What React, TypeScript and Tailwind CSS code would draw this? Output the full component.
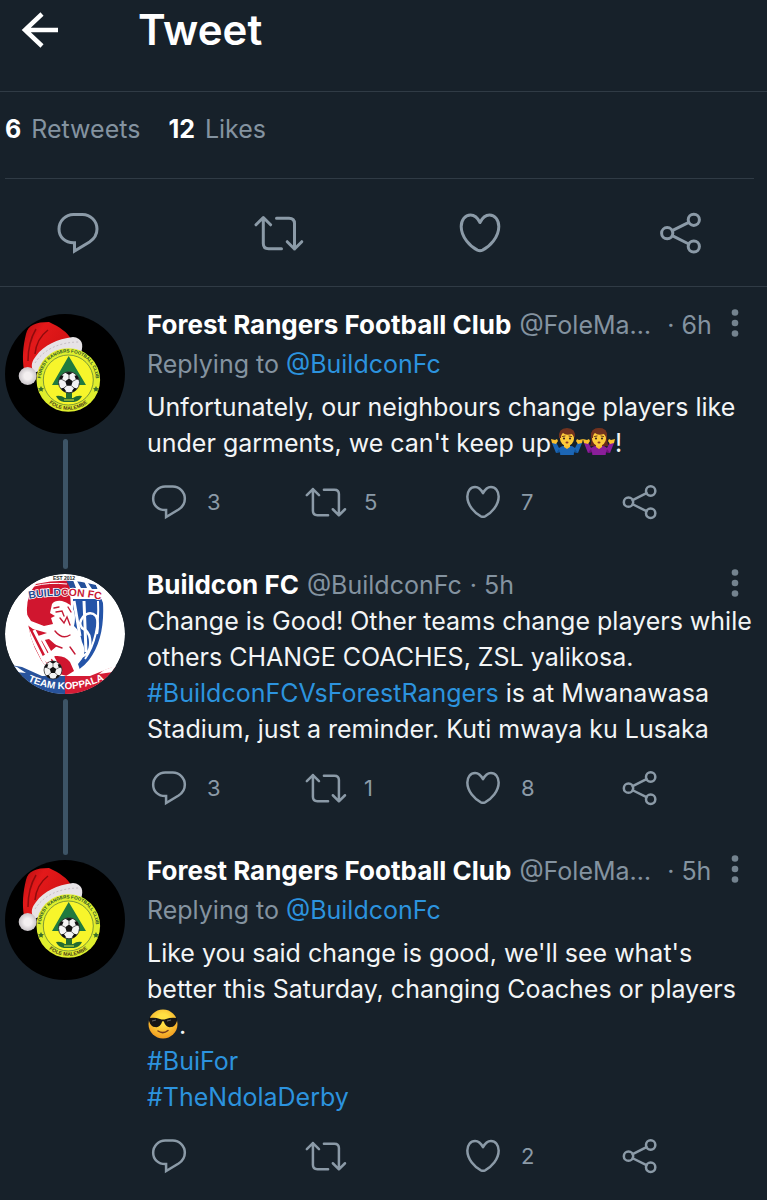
import type { ReactNode } from "react";

type IconProps = { className?: string };

const iconStroke = {
  viewBox: "0 0 48 48",
  fill: "none",
  stroke: "currentColor",
  strokeWidth: 3,
  strokeLinecap: "round" as const,
  strokeLinejoin: "round" as const,
  overflow: "visible" as const,
  "aria-hidden": true,
};

function ReplyIcon({ className }: IconProps) {
  return (
    <svg {...iconStroke} strokeLinejoin="miter" className={className}>
      <path d="M19.5 5.5H28.5C36.5 5.5 43 12 43 20C43 25.5 40 30 35.5 33L20.5 42V33.7H19.5C11 33.7 5 28 5 20C5 12 11.5 5.5 19.5 5.5Z" />
    </svg>
  );
}

function RetweetIcon({ className }: IconProps) {
  return (
    <svg {...iconStroke} className={className}>
      <path d="M1 15.8L8.3 8.5L15.6 15.8M8.3 8.5V34.5Q8.3 39.8 13.6 39.8H26.5" />
      <path d="M21.5 9.2H34Q39.5 9.2 39.5 14.5V40M32.2 32.7L39.5 40L46.8 32.7" />
    </svg>
  );
}

function HeartIcon({ className }: IconProps) {
  return (
    <svg {...iconStroke} className={className}>
      <path d="M24 13.5C21.5 8.5 18 6 14.5 6C9 6 5.2 11 5.2 17.5C5.2 28 14 37.5 21.5 41.2Q24 42.3 26.5 41.2C34 37.5 42.8 28 42.8 17.5C42.8 11 39 6 33.5 6C30 6 26.5 8.5 24 13.5Z" />
    </svg>
  );
}

function ShareIcon({ className }: IconProps) {
  return (
    <svg {...iconStroke} className={className}>
      <circle cx="10.2" cy="24.2" r="5.6" />
      <circle cx="36.8" cy="10.8" r="5.6" />
      <circle cx="36.8" cy="37.5" r="5.6" />
      <path d="M15.2 21.7L31.8 13.3M15.2 26.7L31.8 35" />
    </svg>
  );
}

function SoccerBall({ x, y, r }: { x: number; y: number; r: number }) {
  return (
    <g transform={`translate(${x} ${y}) scale(${r / 10})`}>
      <circle r="10" fill="#f4f4f4" stroke="#222" strokeWidth=".8" />
      <path
        fill="#111"
        d="M0-3.6L3.6-1L2.2 3.2H-2.2L-3.6-1ZM-3.5-9.2L0-7L3.5-9.2Q0-10.6-3.5-9.2ZM9.6-2.4L6.6-2.6L5.2-6.2L7.4-6.6Q9.2-4.8 9.6-2.4ZM-9.6-2.4L-6.6-2.6L-5.2-6.2L-7.4-6.6Q-9.2-4.8-9.6-2.4ZM7.8 6L5 5.2L3 8L3.4 9.4Q6.2 8.4 7.8 6ZM-7.8 6L-5 5.2L-3 8L-3.4 9.4Q-6.2 8.4-7.8 6Z"
      />
      <path
        stroke="#333"
        strokeWidth=".7"
        d="M0-3.6V-7M3.6-1L6.6-2.6M2.2 3.2L4.8 5.4M-2.2 3.2L-4.8 5.4M-3.6-1L-6.6-2.6"
      />
    </g>
  );
}

function ForestAvatar({ id }: { id: string }) {
  return (
    <svg viewBox="0 0 120 120" className="size-30 shrink-0" role="img" aria-label="Forest Rangers Football Club">
      <defs>
        <linearGradient id={`${id}-hat`} x1="0" y1="0" x2="1" y2=".6">
          <stop offset="0" stopColor="#b40d10" />
          <stop offset=".35" stopColor="#e3191a" />
          <stop offset="1" stopColor="#cf1112" />
        </linearGradient>
        <radialGradient id={`${id}-fur`}>
          <stop offset=".4" stopColor="#f3eff0" />
          <stop offset="1" stopColor="#c9c4c8" />
        </radialGradient>
        <path id={`${id}-top`} d="M37 74A27.500 27.500 0 1 1 89.600 74" />
        <path id={`${id}-bottom`} d="M36.300 79A30 30 0 0 0 90.300 79" />
      </defs>
      <circle cx="60" cy="60" r="60" fill="#000" />
      <path
        fill={`url(#${id}-hat)`}
        d="M19 56C17 44 18 32 21 20C23 11 31 8 44 8C55 13 62 18 67 26L31 49L27 56Z"
      />
      <path fill="none" stroke="#8f0b0d" strokeWidth="1.500" d="M23 47C23 36 25 25 31 15M30 40C31 30 35 22 43 16" />
      <path fill="#e7e3e6" d="M29 59C25 52 27 47 31 42C39 31 52 25 68 23C77 24 79 30 76 39C61 35 43 41 34 57Z" />
      <path fill="none" stroke="#c6bfc5" strokeWidth="1" strokeDasharray="2 2" d="M30 49C38 36 54 28 74 28" />
      <circle cx="22.700" cy="62" r="9" fill={`url(#${id}-fur)`} />
      <circle cx="63.300" cy="66" r="31.800" fill="#dfee2d" />
      <circle cx="63.300" cy="66" r="25" fill="#f7f52b" stroke="#5f813a" strokeWidth=".8" />
      <text fill="#26502c" fontFamily="Liberation Sans, sans-serif" fontWeight="700" fontSize="4.600">
        <textPath href={`#${id}-top`} startOffset="50%" textAnchor="middle">FOREST RANGERS FOOTBALL CLUB</textPath>
      </text>
      <text fill="#4e3c18" fontFamily="Liberation Sans, sans-serif" fontWeight="700" fontSize="5.200">
        <textPath href={`#${id}-bottom`} startOffset="50%" textAnchor="middle">FOLE MALEMBE</textPath>
      </text>
      <path fill="#376b2b" d="M36 72l1 2 2 .3-1.500 1.400.4 2-1.900-1-1.900 1 .4-2L33 74.300l2-.3ZM91 72l1 2 2 .3-1.500 1.400.4 2-1.900-1-1.900 1 .4-2L88 74.300l2-.3Z" />
      <path fill="#1f7a3f" d="M63.700 42L81 71H74Q64 54 54 71H47Z" />
      <path fill="#236b32" d="M61 78H67V85H61ZM51 82Q56 81 60 84H68Q72 81 77 82Q75 87 69 88H59Q53 87 51 82Z" />
      <path fill="none" stroke="#d7e33b" strokeWidth="1" d="M59 86H69" />
      <SoccerBall x={64} y={68.300} r={10.500} />
    </svg>
  );
}

function BuildconAvatar() {
  return (
    <svg viewBox="0 0 120 120" className="size-30 shrink-0" role="img" aria-label="Buildcon FC">
      <defs>
        <clipPath id="bc-round">
          <circle cx="60" cy="60" r="60" />
        </clipPath>
        <clipPath id="bc-shield">
          <path d="M31 10Q62 3 91 11L98 29Q100 65 84 86Q76 96 62 102Q42 98 35 84Q23 64 22 38Q21 22 31 10Z" />
        </clipPath>
        <path id="bc-name" d="M23 25Q60 18 97 26" />
        <path id="bc-ribbon" d="M23 107Q60 124 99 106" />
      </defs>
      <g clipPath="url(#bc-round)">
        <circle cx="60" cy="60" r="60" fill="#fff" />
        <g clipPath="url(#bc-shield)">
          <path fill="#d0162f" d="M15 0H64L70 104H15Z" />
          <path fill="#2454a8" d="M68 25H105V110H70Z" />
          <path fill="none" stroke="#fff" strokeWidth="3" d="M69 27L75 62M79 27L81 78M22 54L42 94M29 56L50 97M36 62L56 98" />
          <path fill="#fff" d="M61 0H100V16H66Z" />
          <path fill="#24509a" d="M61 6H68L71 14H65ZM72 7H79L82 14H76ZM83 9H90L93 15H87Z" />
        </g>
        <path fill="none" stroke="#fff" strokeWidth="2" d="M93 27Q95 63 80 85" />
        <path fill="none" stroke="#fff" strokeWidth="1" d="M29 12Q44 8 62 10" />
        <text
          fill="#27498f"
          stroke="#fff"
          strokeWidth="1.600"
          paintOrder="stroke"
          fontFamily="Liberation Sans, sans-serif"
          fontWeight="700"
          fontSize="10.500"
        >
          <textPath href="#bc-name" startOffset="50%" textAnchor="middle">
            BUILD<tspan fill="#c81835">CON FC</tspan>
          </textPath>
        </text>
        <text x="59" y="6" textAnchor="middle" fill="#222" fontFamily="Liberation Sans, sans-serif" fontWeight="700" fontSize="5">EST 2012</text>
        <path
          fill="#fff"
          d="M47 30Q50 26 57 27Q66 29 69 37Q71 44 69 52Q75 57 77 68Q82 77 77 85L73 90L76 99L71 102H61L69 97L65 88Q60 81 50 82L42 89L36 83L46 77L52 72L44 65L35 67L33 62L42 59L28 55L21 50L19 36L26 47L39 52L48 50L46 44L50 42L45 39Z"
        />
        <path fill="none" stroke="#fff" strokeWidth="2.500" strokeLinecap="round" d="M76 83Q87 79 85 65Q84 57 77 54Q73 49 78 43Q85 36 91 42Q94 48 92 59" />
        <path fill="none" stroke="#c51b36" strokeWidth="1.400" strokeLinecap="round" d="M49 34L54 33M51 38L57 37L59 42M55 44L59 49L62 43L65 51M63 33L66 38M50 57Q57 66 65 61M49 71L57 74M65 73L70 80" />
        <path fill="#28539c" d="M0 90L17 93L37 102H60V122H5Z" />
        <path fill="#d41c35" d="M60 102H85L105 94L120 91V122H60Z" />
        <path fill="#fff" d="M4 91L12 93L21 99L11 98ZM113 91L99 96L94 100L108 98Z" />
        <text fill="#fff" fontFamily="Liberation Sans, sans-serif" fontWeight="700" fontSize="10">
          <textPath href="#bc-ribbon" startOffset="50%" textAnchor="middle">TEAM KOPPALA</textPath>
        </text>
        <SoccerBall x={48} y={96} r={9} />
      </g>
    </svg>
  );
}

function ShrugEmoji({ woman }: { woman?: boolean }) {
  const shirt = woman ? "#8a1f9a" : "#1c66b5";
  const shade = woman ? "#701179" : "#12559b";
  return (
    <svg viewBox="0 0 32 32" className="inline-block size-8 align-[-6px]" role="img" aria-label={woman ? "woman shrugging" : "man shrugging"}>
      {woman && <path fill="#6b291b" d="M8 10Q8 2 16 2Q25 2 24 11Q24 18 26 20H7Q9 17 8 10Z" />}
      <path fill={shirt} d="M1 17L5 16L8 22Q12 19 16 20Q21 19 24 22L27 16L31 17L27 27L23 26V29H9V26L5 27Z" />
      <path fill={shade} d="M8 23L10 29H9V26L5 27ZM24 23L22 29H23V26L27 27Z" />
      <path fill="#fbc02d" d="M0 13L4 14L6 13L7 15L5 18L1 17ZM32 13L28 14L26 13L25 15L27 18L31 17ZM13 18H19V21L16 23L13 21Z" />
      <ellipse cx="16" cy="12.500" rx="7" ry="7.500" fill="#fccb3b" />
      <path fill="#71331f" d="M8 12Q7 2 16 2Q25 2 24 12L21 8Q15 10 12 7Q10 8 10 12Z" />
      <path fill="none" stroke="#6b351b" strokeWidth="1" strokeLinecap="round" d="M11.500 10.500L14 10M18 10L20.500 10.500" />
      <circle cx="13" cy="12.500" r="1.100" fill="#3b2925" />
      <circle cx="19" cy="12.500" r="1.100" fill="#3b2925" />
      <ellipse cx="16" cy="16.500" rx="1.500" ry="1" fill="#8a3926" />
    </svg>
  );
}

function SunglassesEmoji() {
  return (
    <svg viewBox="0 0 32 32" className="inline-block size-8 align-[-6px]" role="img" aria-label="smiling face with sunglasses">
      <defs>
        <radialGradient id="cool-face" cx=".5" cy=".35" r=".65">
          <stop offset=".3" stopColor="#ffdf43" />
          <stop offset="1" stopColor="#f29b20" />
        </radialGradient>
      </defs>
      <circle cx="16" cy="16" r="14.500" fill="url(#cool-face)" />
      <path fill="#151515" d="M2 10Q8 9 13 11Q16 12 19 11Q24 9 30 10L30 13Q28 19 24 19Q19 20 17 14Q16 12 15 14Q13 20 8 19Q4 19 2 13Z" />
      <path stroke="#666" strokeWidth="1" d="M5 13L9 12M20 13L24 12" />
      <path fill="none" stroke="#76391b" strokeWidth="1.500" strokeLinecap="round" d="M11 23Q16 26.500 21 22.500" />
    </svg>
  );
}

function Action({ label, count, children }: { label: string; count?: number; children: ReactNode }) {
  return (
    <button type="button" aria-label={label} className="flex h-12 items-center gap-4 text-[22px]">
      <span className="flex w-11 justify-center">{children}</span>
      {count !== undefined && <span>{count}</span>}
    </button>
  );
}

type TweetProps = {
  avatar: ReactNode;
  name: string;
  handle: string;
  time: string;
  replyingTo?: string;
  replies?: number;
  retweets?: number;
  likes?: number;
  last?: boolean;
  children: ReactNode;
};

function Tweet({ avatar, name, handle, time, replyingTo, replies, retweets, likes, last, children }: TweetProps) {
  return (
    <li className="flex gap-[22px] pl-[5px]">
      <div className="flex flex-col items-center">
        {avatar}
        {!last && <div className="my-[5px] w-[5px] flex-1 rounded-full bg-[#3d5466]" />}
      </div>
      <article className="-mt-[7px] min-w-0 flex-1 pb-12">
        <header className="flex h-9 items-center pr-6">
          <div className="flex min-w-0 flex-1 items-center whitespace-nowrap">
            <strong className="mr-2 text-[26px] font-bold text-white">{name}</strong>
            <span className={handle.endsWith("…") ? "mr-4 text-[#8493a0]" : "mr-2 text-[#8493a0]"}>{handle}</span>
            <span className="text-[#8493a0]">· {time}</span>
          </div>
          <button type="button" aria-label="More" className="text-[#74838f]">
            <svg viewBox="0 0 16 32" className="h-8 w-4" fill="currentColor" aria-hidden="true">
              <circle cx="8" cy="3.500" r="3.300" />
              <circle cx="8" cy="14" r="3.300" />
              <circle cx="8" cy="24.500" r="3.300" />
            </svg>
          </button>
        </header>
        {replyingTo && (
          <p className="mt-[3px] mb-[7px] text-[#8493a0]">
            Replying to <a href="#profile" className="text-[#2c93de]">{replyingTo}</a>
          </p>
        )}
        <div className="text-[#f3f5f6]">{children}</div>
        <div className="mt-[17px] grid grid-cols-[157fr_157fr_157fr_149fr] text-[#8b9aa7]">
          <Action label="Reply" count={replies}><ReplyIcon className="size-10" /></Action>
          <Action label="Retweet" count={retweets}><RetweetIcon className="size-10" /></Action>
          <Action label="Like" count={likes}><HeartIcon className="size-10" /></Action>
          <Action label="Share"><ShareIcon className="size-10" /></Action>
        </div>
      </article>
    </li>
  );
}

export default function App() {
  return (
    <main className="min-h-screen overflow-hidden bg-[#17212a] font-['Inter','Liberation_Sans',sans-serif] text-[25px] leading-9">
      <header className="flex h-[92px] items-start border-b border-[#303b45] pl-5 text-white">
        <button type="button" aria-label="Back" className="flex h-[60px] items-center">
          <svg viewBox="0 0 42 42" className="size-[42px]" fill="none" stroke="currentColor" strokeWidth="4.500" aria-hidden="true">
            <path d="M22 5L5 21L22 37M5 21H38" />
          </svg>
        </button>
        <h1 className="ml-[76px] text-[42px] leading-[60px] font-semibold">Tweet</h1>
      </header>

      <section className="mr-[13px] ml-[5px] flex h-[87px] items-center gap-7 border-b border-[#303b45] pb-3 text-[#8493a0]">
        <a href="#retweets" className="flex gap-2.5"><strong className="font-bold text-white">6</strong>Retweets</a>
        <a href="#likes" className="flex gap-2.5"><strong className="font-bold text-white">12</strong>Likes</a>
      </section>

      <div className="flex h-[108px] items-center justify-between border-b border-[#303b45] pr-[62px] pl-[54px] text-[#8b9aa7]">
        <button type="button" aria-label="Reply"><ReplyIcon className="size-12" /></button>
        <button type="button" aria-label="Retweet"><RetweetIcon className="size-12" /></button>
        <button type="button" aria-label="Like"><HeartIcon className="size-12" /></button>
        <button type="button" aria-label="Share"><ShareIcon className="size-12" /></button>
      </div>

      <ul className="pt-[27px]">
        <Tweet avatar={<ForestAvatar id="forest-a" />} name="Forest Rangers Football Club" handle="@FoleMa…" time="6h" replyingTo="@BuildconFc" replies={3} retweets={5} likes={7}>
          <p>
            Unfortunately, our neighbours change players like<br />
            under garments, we can't keep up<ShrugEmoji /><ShrugEmoji woman />!
          </p>
        </Tweet>
        <Tweet avatar={<BuildconAvatar />} name="Buildcon FC" handle="@BuildconFc" time="5h" replies={3} retweets={1} likes={8}>
          <p>
            Change is Good! Other teams change players while<br />
            others CHANGE COACHES, ZSL yalikosa.<br />
            <a href="#match" className="text-[#2c93de]">#BuildconFCVsForestRangers</a> is at Mwanawasa<br />
            Stadium, just a reminder. Kuti mwaya ku Lusaka
          </p>
        </Tweet>
        <Tweet avatar={<ForestAvatar id="forest-b" />} name="Forest Rangers Football Club" handle="@FoleMa…" time="5h" replyingTo="@BuildconFc" likes={2} last>
          <p>
            Like you said change is good, we'll see what's<br />
            better this Saturday, changing Coaches or players<br />
            <SunglassesEmoji />.<br />
            <a href="#buifor" className="text-[#2c93de]">#BuiFor</a><br />
            <a href="#derby" className="text-[#2c93de]">#TheNdolaDerby</a>
          </p>
        </Tweet>
      </ul>
    </main>
  );
}
